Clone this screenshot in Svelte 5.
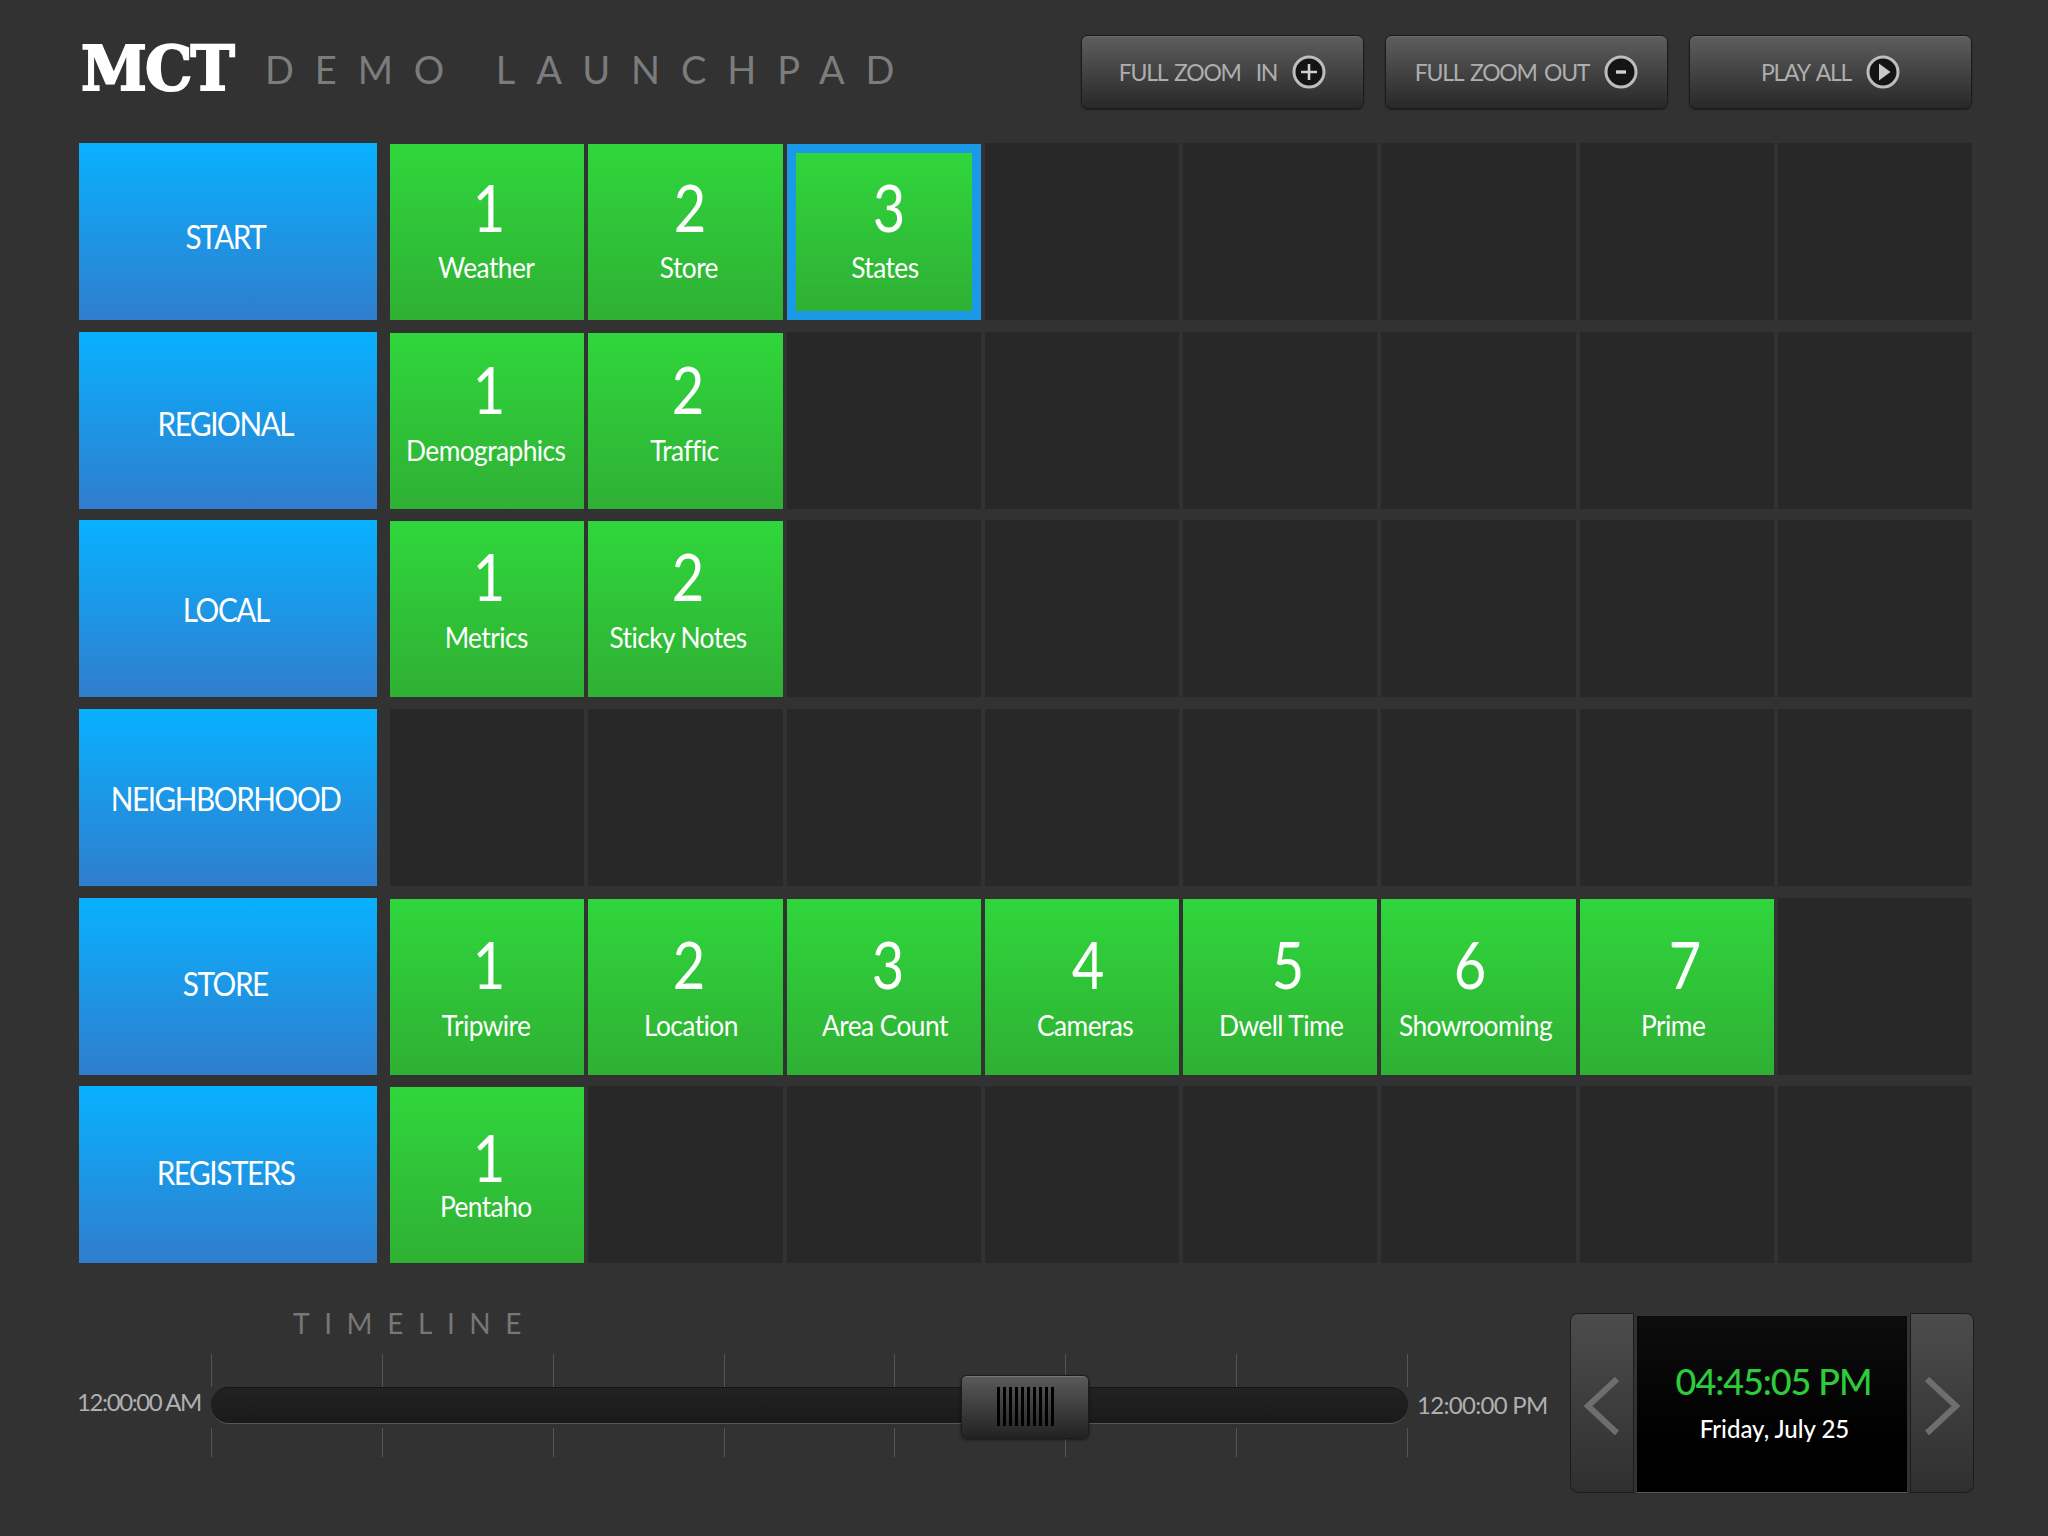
<script>
	const rows = [
		{ name: 'START', shift: 4, pad: 33, gap: 13, tiles: [
			{ n: 1, label: 'Weather', dn: 2, dl: -1 },
			{ n: 2, label: 'Store', dn: 5, dl: 4 },
			{ n: 3, label: 'States', dn: 6, dl: 1, active: true }
		] },
		{ name: 'REGIONAL', shift: 3, pad: 26, gap: 14, tiles: [
			{ n: 1, label: 'Demographics', dn: 2, dl: -1 },
			{ n: 2, label: 'Traffic', dn: 3, dl: -1 }
		] },
		{ name: 'LOCAL', shift: 0, pad: 25, gap: 14, tiles: [
			{ n: 1, label: 'Metrics', dn: 2, dl: -1 },
			{ n: 2, label: 'Sticky Notes', dn: 3, dl: -7 }
		] },
		{ name: 'NEIGHBORHOOD', shift: 0, pad: 25, gap: 14, tiles: [] },
		{ name: 'STORE', shift: -3, pad: 35, gap: 14, tiles: [
			{ n: 1, label: 'Tripwire', dn: 2, dl: -1 },
			{ n: 2, label: 'Location', dn: 4, dl: 6 },
			{ n: 3, label: 'Area Count', dn: 5, dl: 1 },
			{ n: 4, label: 'Cameras', dn: 6, dl: 3 },
			{ n: 5, label: 'Dwell Time', dn: 8, dl: 1 },
			{ n: 6, label: 'Showrooming', dn: -8, dl: -3 },
			{ n: 7, label: 'Prime', dn: 9, dl: -3 }
		] },
		{ name: 'REGISTERS', shift: -3, pad: 40, gap: 2, tiles: [
			{ n: 1, label: 'Pentaho', dn: 2, dl: -1 }
		] }
	];

	const slots = [0, 1, 2, 3, 4, 5, 6, 7];
	const ticks = [0, 1, 2, 3, 4, 5, 6, 7];
</script>

<div class="page">
	<header class="header">
		<div class="brand">
			<span class="logo">MCT</span>
			<span class="title">DEMO LAUNCHPAD</span>
		</div>
		<div class="actions">
			<button class="btn">
				<span class="btn-text">FULL ZOOM&nbsp; IN</span>
				<svg class="btn-icon" viewBox="0 0 34 34">
					<circle cx="17" cy="17" r="15" fill="#141414" stroke="#bdbdbd" stroke-width="3" />
					<path d="M17 9v16M9 17h16" stroke="#d0d0d0" stroke-width="2.6" fill="none" />
				</svg>
			</button>
			<button class="btn">
				<span class="btn-text">FULL ZOOM OUT</span>
				<svg class="btn-icon" viewBox="0 0 34 34">
					<circle cx="17" cy="17" r="15" fill="#141414" stroke="#bdbdbd" stroke-width="3" />
					<path d="M12 17h10" stroke="#d0d0d0" stroke-width="3.4" fill="none" />
				</svg>
			</button>
			<button class="btn">
				<span class="btn-text">PLAY ALL</span>
				<svg class="btn-icon" viewBox="0 0 34 34">
					<circle cx="17" cy="17" r="15" fill="#141414" stroke="#bdbdbd" stroke-width="3" />
					<path d="M13 8.5 24.5 17 13 25.5z" fill="#c8c8c8" />
				</svg>
			</button>
		</div>
	</header>

	<main class="board">
		{#each rows as row}
			<div class="category" style="padding-top: {Math.max(row.shift, 0) * 2}px; padding-bottom: {Math.max(-row.shift, 0) * 2}px">
				<span>{row.name}</span>
			</div>
			{#each slots as i}
				{@const tile = row.tiles[i]}
				{#if tile}
					<div class="tile" class:active={tile.active} style="padding-top: {tile.active ? row.pad - 9 : row.pad}px">
						<span class="num" style="margin-left: {tile.dn * 2}px">{tile.n}</span>
						<span class="label" style="margin-left: {tile.dl * 2}px; margin-top: {row.gap}px">{tile.label}</span>
					</div>
				{:else}
					<div class="cell"></div>
				{/if}
			{/each}
		{/each}
	</main>

	<footer class="footer">
		<div class="timeline">
			<div class="timeline-title">TIMELINE</div>
			<div class="slider-row">
				<span class="time-left">12:00:00 AM</span>
				<div class="slider">
					<div class="ticks top">
						{#each ticks as t}<i></i>{/each}
					</div>
					<div class="track"></div>
					<div class="ticks bottom">
						{#each ticks as t}<i></i>{/each}
					</div>
					<div class="thumb"><div class="grip"></div></div>
				</div>
				<span class="time-right">12:00:00 PM</span>
			</div>
		</div>

		<div class="clock">
			<button class="arrow prev" aria-label="Previous">
				<svg viewBox="0 0 40 64" width="40" height="64"><path d="M35 5 6 32l29 27" fill="none" stroke="#6e6e6e" stroke-width="6" /></svg>
			</button>
			<div class="display">
				<div class="time">04:45:05 PM</div>
				<div class="date">Friday, July 25</div>
			</div>
			<button class="arrow next" aria-label="Next">
				<svg viewBox="0 0 40 64" width="40" height="64"><path d="M5 5l29 27L5 59" fill="none" stroke="#6e6e6e" stroke-width="6" /></svg>
			</button>
		</div>
	</footer>
</div>

<style>
	:global(body) {
		margin: 0;
		background: #323232;
	}

	.page {
		width: 2048px;
		height: 1536px;
		box-sizing: border-box;
		padding: 35px 76px 0 79px;
		background: #323232;
		font-family: Lato, "Open Sans", sans-serif;
		overflow: hidden;
	}

	.header {
		height: 74px;
		display: flex;
		align-items: center;
		justify-content: space-between;
	}

	.brand {
		display: flex;
		align-items: center;
		gap: 33px;
		margin-top: -10px;
		margin-left: 2px;
	}

	.logo {
		display: inline-block;
		width: 151px;
		font-family: "DejaVu Serif", serif;
		font-weight: 700;
		font-size: 62px;
		line-height: 66px;
		color: #fff;
		letter-spacing: -2px;
		-webkit-text-stroke: 2px #fff;
		transform: translateY(2px) scaleX(0.96);
		transform-origin: left center;
	}

	.title {
		font-weight: 400;
		font-size: 38px;
		letter-spacing: 20.9px;
		color: #7c7c7c;
		white-space: pre;
		margin-top: 4px;
	}

	.actions {
		display: flex;
		gap: 21px;
	}

	.btn {
		width: 283px;
		height: 74px;
		display: flex;
		align-items: center;
		justify-content: center;
		gap: 15px;
		padding: 0;
		border: 1px solid #1c1c1c;
		border-radius: 7px;
		background: linear-gradient(#5e5e5e, #282828);
		box-shadow: inset 0 1px 0 #6c6c6c, 0 1px 2px rgba(0, 0, 0, 0.4);
	}

	.btn-text {
		font-family: Lato, sans-serif;
		font-size: 23px;
		letter-spacing: -1.3px;
		word-spacing: 3px;
		color: #aeaeae;
		white-space: nowrap;
	}

	.btn-icon {
		width: 34px;
		height: 34px;
	}

	.board {
		margin-top: 34px;
		display: grid;
		grid-template-columns: 307px repeat(8, 194.25px);
		grid-auto-rows: 177px;
		column-gap: 4px;
		row-gap: 11.7px;
	}

	.category {
		box-sizing: border-box;
		margin-right: 9px;
		display: flex;
		align-items: center;
		justify-content: center;
		font-size: 33px;
		color: #fff;
		background: linear-gradient(#08b1ff, #307dcd);
	}

	.category span {
		display: inline-block;
		margin-right: 5px;
		white-space: nowrap;
		letter-spacing: -1.6px;
		transform: scaleX(0.9);
	}

	.cell {
		background: #282828;
	}

	.tile {
		box-sizing: border-box;
		margin-top: 1px;
		display: flex;
		flex-direction: column;
		align-items: center;
		color: #fff;
		background: linear-gradient(#30d63c, #2fb034);
	}

	.tile.active {
		border: 9px solid #1a9ae6;
	}

	.num {
		display: inline-block;
		font-size: 66px;
		line-height: 60px;
		transform: scaleX(0.85);
	}

	.label {
		display: inline-block;
		font-size: 28px;
		line-height: 34px;
		letter-spacing: -0.6px;
		white-space: nowrap;
		transform: scaleX(0.94);
	}

	.footer {
		margin-top: 48px;
		display: flex;
		justify-content: space-between;
	}

	.timeline-title {
		margin-left: 214px;
		height: 43px;
		font-size: 28px;
		line-height: 24px;
		letter-spacing: 14.6px;
		color: #777;
		font-weight: 400;
	}

	.slider-row {
		display: flex;
		align-items: center;
		gap: 11px;
	}

	.time-left,
	.time-right {
		font-size: 24px;
		color: #b0b0b0;
		white-space: nowrap;
	}

	.time-left {
		width: 123px;
		margin-left: -2px;
		margin-top: -9px;
		letter-spacing: -1.4px;
	}

	.time-right {
		margin-left: -2px;
		margin-top: -3px;
		letter-spacing: -0.7px;
	}

	.slider {
		position: relative;
		width: 1197px;
	}

	.ticks {
		display: flex;
		justify-content: space-between;
	}

	.ticks i {
		width: 1px;
		background: #555;
	}

	.ticks.top {
		height: 33px;
	}

	.ticks.bottom {
		height: 29px;
		margin-top: 4px;
	}

	.track {
		height: 37px;
		box-sizing: border-box;
		border-radius: 18px;
		background: linear-gradient(#222, #1a1a1a);
		border-top: 1px solid #141414;
		border-bottom: 1px solid #555;
	}

	.thumb {
		position: absolute;
		left: 750px;
		top: 21px;
		width: 128px;
		height: 64px;
		box-sizing: border-box;
		display: flex;
		justify-content: center;
		padding-top: 11px;
		border: 1px solid #1c1c1c;
		border-radius: 6px;
		background: linear-gradient(#5a5a5a, #222);
		box-shadow: inset 0 1px 0 #777, 0 1px 3px rgba(0, 0, 0, 0.5);
	}

	.grip {
		width: 57px;
		height: 39px;
		background: repeating-linear-gradient(90deg, #000 0 3px, transparent 3px 6px);
	}

	.clock {
		display: flex;
		align-items: stretch;
		height: 180px;
		margin-top: 2px;
		margin-right: -2px;
		gap: 3px;
	}

	.arrow {
		width: 64px;
		padding: 6px 0 0;
		display: flex;
		align-items: center;
		justify-content: center;
		background: linear-gradient(#4c4c4c, #2f2f2f);
		border: 1px solid #1c1c1c;
	}

	.prev {
		border-radius: 8px 0 0 8px;
	}

	.next {
		border-radius: 0 8px 8px 0;
	}

	.display {
		width: 270px;
		margin-top: 3px;
		box-sizing: border-box;
		padding: 43px 0 0 3px;
		text-align: center;
		background: linear-gradient(#0d0d0d, #000 70%);
		border-bottom: 1px solid #555;
	}

	.time {
		font-size: 36px;
		line-height: 44px;
		font-weight: 500;
		letter-spacing: -1.1px;
		color: #2ecb3c;
	}

	.date {
		margin-top: 11px;
		padding-left: 2px;
		font-size: 24px;
		line-height: 30px;
		font-weight: 500;
		color: #fff;
	}
</style>
